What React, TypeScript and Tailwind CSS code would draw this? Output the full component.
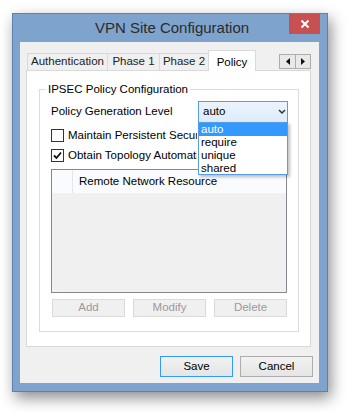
import React from "react";

const font = { fontFamily: '"Liberation Sans", Arial, sans-serif' };

function Tab({ label, active, w }: { label: string; active?: boolean; w: string }) {
  return active ? (
    <div className={`${w} h-[21px] -mb-px -mx-[1px] z-10 bg-white border border-[#d9d9d9] border-b-0 flex items-start justify-center pt-[3px] text-[11.5px] text-black`}>
      {label}
    </div>
  ) : (
    <div className={`${w} h-[17px] bg-[#f0f0f0] border border-[#d9d9d9] border-b-0 -ml-px first:ml-0 flex items-center justify-center text-[11.5px] text-[#222]`}>
      {label}
    </div>
  );
}

function Check({ checked, label }: { checked?: boolean; label: string }) {
  return (
    <div className="flex items-center h-[13px] gap-[4px] text-[11.5px] whitespace-nowrap">
      <div className="w-[13px] h-[13px] border border-[#333] bg-white flex items-center justify-center shrink-0">
        {checked && (
          <svg width="9" height="9" viewBox="0 0 9 9">
            <path d="M1 4.5 L3.5 7 L8 1.5" stroke="#111" strokeWidth="1.8" fill="none" />
          </svg>
        )}
      </div>
      {/* the open dropdown covers the rest of the label */}
      <span className="w-[129px] overflow-hidden">{label}</span>
    </div>
  );
}

function DisabledBtn({ label }: { label: string }) {
  return (
    <div className="w-[73px] h-[18px] border border-[#dadada] bg-[#f0f0f0] flex items-center justify-center text-[11.5px] text-[#9a9a9a]">
      {label}
    </div>
  );
}

export default function App() {
  return (
    <div className="w-[347px] h-[412px] bg-white pt-[13px] pl-[12px] overflow-hidden" style={font}>
      <div className="w-[316px] h-[379px] bg-[#7ea3cc] border border-[#5d82ad] shadow-[3px_6px_14px_rgba(0,0,0,0.45)] flex flex-col">
        {/* title bar */}
        <div className="relative h-[28px] shrink-0 flex items-center justify-center">
          <span className="text-[15px] text-[#2b2b2b] pl-[4px] pt-[1px]">VPN Site Configuration</span>
          <div className="absolute top-0 right-[7px] w-[31px] h-[20px] bg-[#c75050] flex items-center justify-center">
            <svg width="10" height="10" viewBox="0 0 10 10">
              <path d="M1.5 1.5 L8.5 8.5 M8.5 1.5 L1.5 8.5" stroke="white" strokeWidth="2" />
            </svg>
          </div>
        </div>

        {/* client */}
        <div className="mx-[7px] w-[299px] h-[341px] bg-[#f0f0f0] flex flex-col pt-[8px] pl-[6px]">
          {/* tab strip */}
          <div className="flex items-end h-[20px] w-[285px] relative">
            <div className="flex items-end pl-[1px]">
              <Tab label="Authentication" w="w-[81px]" />
              <Tab label="Phase 1" w="w-[53px]" />
              <Tab label="Phase 2" w="w-[50px]" />
              <Tab label="Policy" active w="w-[48px]" />
            </div>
            <div className="ml-auto flex self-start mt-[4px]">
              <div className="w-[17px] h-[15px] border border-[#adadad] bg-[#e9e9e9] flex items-center justify-center">
                <svg width="4" height="7" viewBox="0 0 4 7"><path d="M4 0 L0 3.5 L4 7 Z" fill="#111" /></svg>
              </div>
              <div className="w-[15px] h-[15px] border border-[#adadad] border-l-0 bg-[#e9e9e9] flex items-center justify-center">
                <svg width="4" height="7" viewBox="0 0 4 7"><path d="M0 0 L4 3.5 L0 7 Z" fill="#111" /></svg>
              </div>
            </div>
          </div>

          {/* tab panel */}
          <div className="w-[285px] h-[277px] bg-white border border-[#d9d9d9] pt-[18px] pl-[12px]">
            {/* group box */}
            <div className="relative w-[260px] h-[243px] border border-[#dcdcdc] pl-[11px] pt-[11px]">
              <span className="absolute -top-[8px] left-[6px] bg-white px-[2px] text-[11.5px] leading-[14px] text-black">
                IPSEC Policy Configuration
              </span>

              <div className="flex items-center h-[22px] text-[11.5px]">
                <span className="w-[147px]">Policy Generation Level</span>
                <div className="relative">
                  <div className="w-[90px] h-[22px] border border-[#569de5] bg-gradient-to-b from-[#ecf4fc] to-[#dcecfc] flex items-center pl-[4px] text-[11.5px]">
                    auto
                    <svg className="ml-auto mr-[1px]" width="8" height="6" viewBox="0 0 8 6">
                      <path d="M1 1 L4 4 L7 1" stroke="#333" strokeWidth="1.5" fill="none" />
                    </svg>
                  </div>
                  <div className="absolute top-[21px] left-0 w-[90px] h-[53px] border border-[#569de5] bg-white z-20 shadow-[2px_2px_3px_rgba(0,0,0,0.25)] text-[11.5px] leading-[13px]">
                    <div className="bg-[#3399ff] text-white pl-[2px] h-[13px]">auto</div>
                    <div className="pl-[2px] h-[13px]">require</div>
                    <div className="pl-[2px] h-[13px]">unique</div>
                    <div className="pl-[2px] h-[13px]">shared</div>
                  </div>
                </div>
              </div>

              <div className="mt-[6px] flex flex-col gap-[7px]">
                <Check label="Maintain Persistent Security Associations" />
                <Check checked label="Obtain Topology Automatically or Push" />
              </div>

              {/* list view */}
              <div className="mt-[7px] w-[236px] h-[124px] border border-[#828790] bg-[#f0f0f0]">
                <div className="h-[24px] bg-[#f9fbfe] flex border-b border-[#eef1f6]">
                  <div className="w-[21px] border-r border-[#e5e5e5]" />
                  <div className="pl-[6px] flex items-center text-[11.5px]">Remote Network Resource</div>
                </div>
              </div>

              <div className="mt-[6px] flex gap-[8px] pl-[1px]">
                <DisabledBtn label="Add" />
                <DisabledBtn label="Modify" />
                <DisabledBtn label="Delete" />
              </div>
            </div>
          </div>

          {/* dialog buttons */}
          <div className="flex justify-end gap-[7px] pr-[6px] mt-[9px]">
            <div className="w-[73px] h-[21px] border border-[#3399ff] bg-gradient-to-b from-[#f2f2f2] to-[#e5e5e5] flex items-center justify-center text-[11.5px] text-black">
              Save
            </div>
            <div className="w-[73px] h-[21px] border border-[#adadad] bg-gradient-to-b from-[#f2f2f2] to-[#e5e5e5] flex items-center justify-center text-[11.5px] text-black">
              Cancel
            </div>
          </div>
        </div>
      </div>
    </div>
  );
}
